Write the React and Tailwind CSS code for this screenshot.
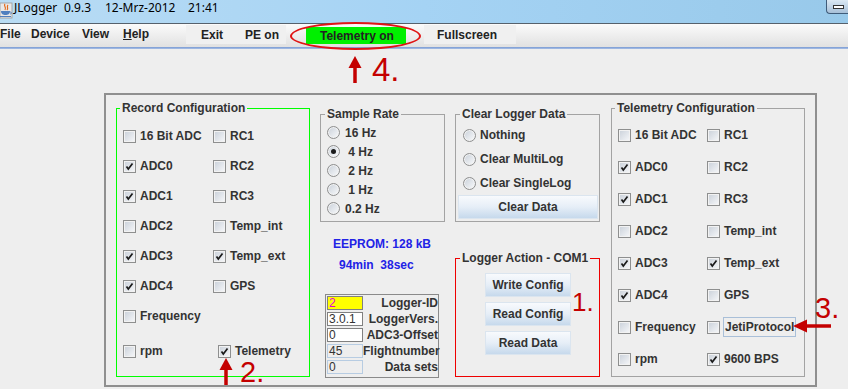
import React from 'react';

const lbl = 'text-[12px] leading-[14px] font-bold text-[#333] whitespace-pre';

function Check({ on }) {
  return (
    <span className="w-[13px] h-[13px] shrink-0 border border-[#8e8f8f] bg-linear-to-br from-[#c9d0d9] to-[#f7f8fa] shadow-[inset_0_0_0_1px_#f2f2f2] flex items-center justify-center">
      {on && (
        <svg width="11" height="11" viewBox="0 0 11 11">
          <path d="M2.5 5.5 L4.3 8 L8.5 2.5" fill="none" stroke="#1b1b1b" strokeWidth="1.7" />
        </svg>
      )}
    </span>
  );
}

function Radio({ on }) {
  return (
    <span className="w-[13px] h-[13px] shrink-0 rounded-full border border-[#8e8f8f] bg-linear-to-br from-[#c9d0d9] to-[#fafbfc] shadow-[inset_0_0_0_1px_#f2f2f2] flex items-center justify-center">
      {on && <span className="w-[5px] h-[5px] rounded-full bg-[#1a1a1a]" />}
    </span>
  );
}

function Item({ text, on, boxed, className = '' }) {
  return (
    <div className={`flex items-center gap-[4px] ${className}`}>
      <Check on={on} />
      <span className={boxed ? `${lbl} -ml-[1px] border border-[#a9bfd8] px-[1px] py-[2px]` : lbl}>{text}</span>
    </div>
  );
}

function Btn({ children, className = '' }) {
  return (
    <div className={`flex items-center justify-center bg-linear-to-b from-[#f8fafd] via-[#e6eef7] to-[#c6d9ec] border border-[#dbe5ef] ${lbl} ${className}`}>
      {children}
    </div>
  );
}

function JavaIcon() {
  return (
    <svg width="13" height="17" viewBox="0 0 13 17" className="mt-[2px]">
      <rect x="0" y="1" width="12" height="15" fill="#e8e8e8" stroke="#9a9a9a" strokeWidth="0.8" />
      <path d="M5 2 C3 4 7 5 5 8 M8 3 C6 5 9 6 7 8" fill="none" stroke="#e46a1a" strokeWidth="1.2" />
      <path d="M1 9 H10 C10 12 8 13 5.5 13 C3 13 1 12 1 9 Z" fill="#4f7fbf" />
      <path d="M10 10 C12 10 12 12 10 12" fill="none" stroke="#4f7fbf" strokeWidth="1" />
      <path d="M0 14.5 H11" stroke="#4f7fbf" strokeWidth="1" />
    </svg>
  );
}

function Arrow({ dir = 'up', className }) {
  if (dir === 'left') {
    return (
      <svg width="40" height="14" viewBox="0 0 40 14" className={className}>
        <path d="M10 7 H38" stroke="#c40000" strokeWidth="3.5" />
        <path d="M0 7 L14 0.5 L14 13.5 Z" fill="#c40000" />
      </svg>
    );
  }
  return (
    <svg width="14" height="27" viewBox="0 0 14 27" className={className}>
      <path d="M7 9 V27" stroke="#c40000" strokeWidth="3.5" />
      <path d="M7 0 L0.5 12 L13.5 12 Z" fill="#c40000" />
    </svg>
  );
}

export default function App() {
  const rec = [
    ['16 Bit ADC', false, 'RC1', false],
    ['ADC0', true, 'RC2', false],
    ['ADC1', true, 'RC3', false],
    ['ADC2', false, 'Temp_int', false],
    ['ADC3', true, 'Temp_ext', true],
    ['ADC4', true, 'GPS', false],
  ];
  const tel = [
    ['16 Bit ADC', false, 'RC1', false],
    ['ADC0', true, 'RC2', false],
    ['ADC1', true, 'RC3', false],
    ['ADC2', false, 'Temp_int', false],
    ['ADC3', true, 'Temp_ext', true],
    ['ADC4', true, 'GPS', false],
    ['Frequency', false, 'JetiProtocol', false],
    ['rpm', false, '9600 BPS', true],
  ];
  const rates = ['16 Hz', ' 4 Hz', ' 2 Hz', ' 1 Hz', '0.2 Hz'];
  const info = [
    { v: '2', l: 'Logger-ID', kind: 'id' },
    { v: '3.0.1', l: 'LoggerVers.', kind: 'edit' },
    { v: '0', l: 'ADC3-Offset', kind: 'edit' },
    { v: '45', l: 'Flightnumber', kind: 'ro' },
    { v: '0', l: 'Data sets', kind: 'ro' },
  ];

  return (
    <div className="w-[848px] h-[389px] bg-[#eeeeee] relative overflow-hidden font-['Liberation_Sans',Arial,sans-serif]">
      {/* window title */}
      <div className="h-[23px] flex items-start bg-linear-to-r from-[#b9dcf4] via-[#a5d3f4] to-[#98c9ea]">
        <JavaIcon />
        <div className="ml-[1px] flex text-[12px] leading-[16px] text-black font-['Noto_Sans',sans-serif]">
          <span className="w-[50px]">JLogger</span>
          <span className="w-[41px]">0.9.3</span>
          <span className="w-[83px]">12-Mrz-2012</span>
          <span>21:41</span>
        </div>
        <div className="ml-auto w-[22px] h-[14px] border border-t-0 border-r-0 border-[#3f5c7a] rounded-bl-[4px] bg-linear-to-b from-[#dbe8f3] to-[#a7c0d8] flex items-center justify-center pl-[2px]">
          <span className="w-[11px] h-[4px] border border-[#333] bg-white" />
        </div>
      </div>
      <div className="h-[1px] bg-[#56616c]" />

      {/* menu bar */}
      <div className="h-[23px] flex items-start bg-linear-to-b from-[#fbfbfb] to-[#e1e1e1] text-[12px] leading-[14px] font-bold text-[#222]">
        <span className="w-[31px] mt-[3px]">File</span>
        <span className="w-[51px] mt-[3px]">Device</span>
        <span className="w-[41px] mt-[3px]">View</span>
        <span className="w-[63px] mt-[3px]"><span className="underline">H</span>elp</span>
        <div className="w-[100px] h-[19px] mt-[1px] bg-[#f0f0f0] flex items-center">
          <span className="ml-[15px] w-[44px]">Exit</span>
          <span>PE on</span>
        </div>
        <div className="ml-[20px] mt-[3px] w-[100px] h-[17px] bg-[#00f000] flex items-center pl-[14px]">Telemetry on</div>
        <div className="ml-[18px] mt-[1px] w-[92px] h-[19px] bg-[#f0f0f0] flex items-center pl-[13px]">Fullscreen</div>
      </div>
      <div className="h-[2px] bg-linear-to-b from-[#7a9ad2] to-[#a9c0e6]" />

      {/* main panel */}
      <div className="ml-[104px] mt-[44px] w-[713px] h-[294px] border-2 border-[#8f8f8f] flex items-start">
        <fieldset className="ml-[10px] mt-[6px] w-[194px] h-[276px] shrink-0 border border-[#00ff00]">
          <legend className={`ml-[3px] px-[2px] ${lbl}`}>Record Configuration</legend>
          <div className="pl-[6px] pt-[6px] grid grid-cols-[90px_1fr] auto-rows-[30px]">
            {rec.map(([a, ca, b, cb]) => (
              <React.Fragment key={a}>
                <Item text={a} on={ca} />
                <Item text={b} on={cb} />
              </React.Fragment>
            ))}
            <Item text="Frequency" on={false} />
            <div />
            <Item text="rpm" on={false} className="mt-[5px] h-[30px]" />
            <Item text="Telemetry" on className="mt-[5px] h-[30px] ml-[5px]" />
          </div>
        </fieldset>

        <div className="ml-[10px] w-[125px] shrink-0 flex flex-col">
          <fieldset className="mt-[12px] h-[115px] border border-[#a3a3a3]">
            <legend className={`ml-[4px] px-[2px] ${lbl}`}>Sample Rate</legend>
            <div className="pl-[6px] pt-[2px]">
              {rates.map((r, i) => (
                <div key={r} className="h-[19px] flex items-center gap-[5px]">
                  <Radio on={i === 1} />
                  <span className={lbl}>{r}</span>
                </div>
              ))}
            </div>
          </fieldset>
          <div className="mt-[15px] pl-[13px] text-[12px] leading-[14px] font-bold text-[#2222e6]">EEPROM: 128 kB</div>
          <div className="mt-[7px] pl-[19px] text-[12px] leading-[14px] font-bold text-[#2222e6] whitespace-pre">94min  38sec</div>
          <div className="mt-[22px] ml-[5px] w-[114px] h-[84px] border border-[#8a8a8a] pl-[1px] flex flex-col">
            {info.map((r) => (
              <div key={r.l} className="h-[16px] flex items-center">
                <div
                  className={`w-[36px] h-[14px] shrink-0 border pl-[1px] text-[12px] leading-[12px] ${
                    r.kind === 'id'
                      ? 'bg-[#ffff00] border-[#808080] text-[#e000e0]'
                      : r.kind === 'edit'
                      ? 'bg-white border-[#808080] text-[#333]'
                      : 'bg-[#eeeeee] border-[#b7cce2] text-[#333]'
                  }`}
                >
                  {r.v}
                </div>
                <div className={`flex-1 flex justify-end ${lbl}`}>{r.l}</div>
              </div>
            ))}
          </div>
        </div>

        <div className="ml-[10px] w-[145px] shrink-0 flex flex-col">
          <fieldset className="mt-[12px] h-[115px] border border-[#a3a3a3]">
            <legend className={`ml-[4px] px-[2px] ${lbl}`}>Clear Logger Data</legend>
            <div className="pl-[7px] pt-[2px]">
              {['Nothing', 'Clear MultiLog', 'Clear SingleLog'].map((t) => (
                <div key={t} className="h-[24px] flex items-center gap-[4px]">
                  <Radio on={false} />
                  <span className={lbl}>{t}</span>
                </div>
              ))}
            </div>
            <Btn className="ml-[2px] w-[140px] h-[24px]">Clear Data</Btn>
          </fieldset>
          <fieldset className="mt-[29px] h-[126px] border border-[#ee0000]">
            <legend className={`ml-[4px] px-[2px] ${lbl}`}>Logger Action - COM1</legend>
            <div className="pl-[29px] pt-[8px] flex flex-col gap-[5px]">
              <Btn className="w-[86px] h-[24px]">Write Config</Btn>
              <Btn className="w-[86px] h-[24px]">Read Config</Btn>
              <Btn className="w-[86px] h-[24px]">Read Data</Btn>
            </div>
          </fieldset>
        </div>

        <fieldset className="ml-[11px] mt-[6px] w-[194px] h-[276px] shrink-0 border border-[#a3a3a3]">
          <legend className={`ml-[3px] px-[2px] ${lbl}`}>Telemetry Configuration</legend>
          <div className="pl-[6px] pt-[4px] grid grid-cols-[89px_1fr] auto-rows-[32px]">
            {tel.map(([a, ca, b, cb]) => (
              <React.Fragment key={a}>
                <Item text={a} on={ca} />
                <Item text={b} on={cb} boxed={b === 'JetiProtocol'} />
              </React.Fragment>
            ))}
          </div>
        </fieldset>
      </div>

      {/* annotations */}
      <div className="absolute left-[290px] top-[22px] w-[131px] h-[28px] rounded-[50%] border-2 border-[#e01515]" />
      <Arrow className="absolute left-[348px] top-[56px]" />
      <span className="absolute left-[372px] top-[53px] text-[33px] leading-none text-[#c40000]">4.</span>
      <Arrow className="absolute left-[219px] top-[358px]" />
      <span className="absolute left-[240px] top-[358px] text-[29px] leading-none text-[#c40000]">2.</span>
      <Arrow dir="left" className="absolute left-[793px] top-[319px]" />
      <span className="absolute left-[815px] top-[294px] text-[29px] leading-none text-[#c40000]">3.</span>
      <span className="absolute left-[572px] top-[289px] text-[26px] leading-none text-[#c40000]">1.</span>
    </div>
  );
}
